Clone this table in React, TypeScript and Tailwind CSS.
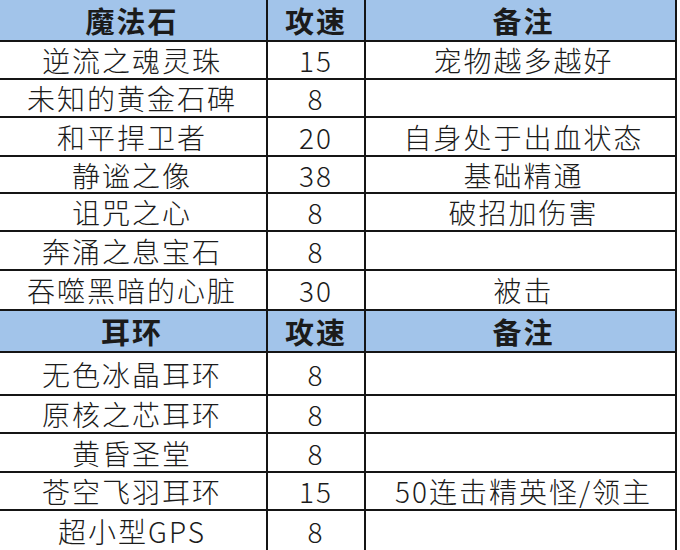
import React from "react";

type Row = { a: string; b: string; c: string; h: number; header?: boolean; last?: boolean };

const rows: Row[] = [
  { a: "魔法石", b: "攻速", c: "备注", h: 42, header: true },
  { a: "逆流之魂灵珠", b: "15", c: "宠物越多越好", h: 38 },
  { a: "未知的黄金石碑", b: "8", c: "", h: 38 },
  { a: "和平捍卫者", b: "20", c: "自身处于出血状态", h: 39 },
  { a: "静谧之像", b: "38", c: "基础精通", h: 37 },
  { a: "诅咒之心", b: "8", c: "破招加伤害", h: 38 },
  { a: "奔涌之息宝石", b: "8", c: "", h: 39 },
  { a: "吞噬黑暗的心脏", b: "30", c: "被击", h: 40 },
  { a: "耳环", b: "攻速", c: "备注", h: 42, header: true },
  { a: "无色冰晶耳环", b: "8", c: "", h: 43 },
  { a: "原核之芯耳环", b: "8", c: "", h: 38 },
  { a: "黄昏圣堂", b: "8", c: "", h: 39 },
  { a: "苍空飞羽耳环", b: "15", c: "50连击精英怪/领主", h: 38 },
  { a: "超小型GPS", b: "8", c: "", h: 39, last: true },
];

export default function App() {
  return (
    <div
      className="w-[680px] h-[550px] overflow-hidden bg-white text-[#1b1b1b]"
      style={{ fontFamily: '"Noto Sans CJK SC", "Noto Sans", sans-serif' }}
    >
      <div className="w-[677px] flex flex-col">
        {rows.map((r, i) => (
          <div
            key={i}
            className={
              "grid grid-cols-[268px_98px_311px] box-border " +
              (r.last ? "" : "border-b-2 border-[#151515] ") +
              (r.header
                ? "bg-[#a2c4ea] font-bold text-[29px] tracking-[2px]"
                : "bg-white font-light text-[28px] tracking-[2px]")
            }
            style={{ height: r.h }}
          >
            <div className="border-r-2 border-[#151515] flex items-center justify-center leading-none pr-[2px]">
              {r.a}
            </div>
            <div className="border-r-2 border-[#151515] flex items-center justify-center leading-none">
              {r.b}
            </div>
            <div className="border-r-2 border-[#151515] flex items-center justify-center leading-none pl-[6px]">
              {r.c}
            </div>
          </div>
        ))}
      </div>
    </div>
  );
}
